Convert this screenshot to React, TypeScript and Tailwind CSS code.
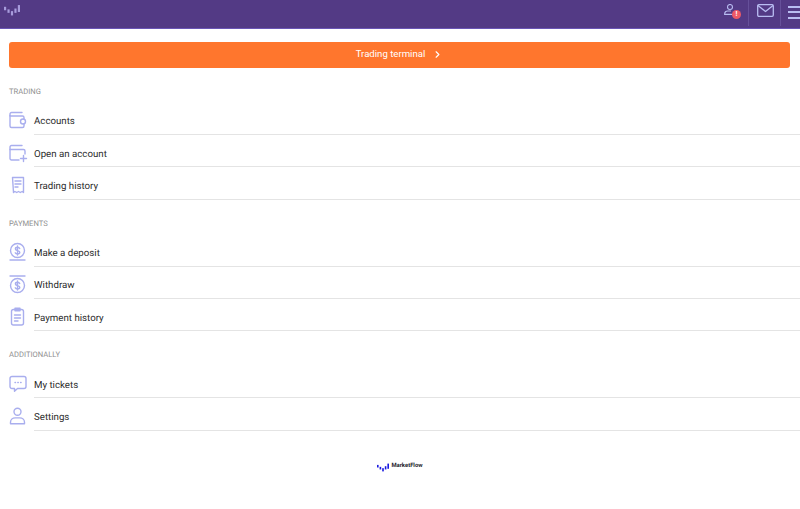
import React from 'react'
import { ChevronRight } from 'lucide-react'

const ICON = { fill: 'none', stroke: '#a9aeee', strokeWidth: 1.4, strokeLinecap: 'round', strokeLinejoin: 'round' } as const

function Svg({ children }: { children: React.ReactNode }): React.JSX.Element {
  return (
    <svg width="18" height="20" viewBox="0 0 18 20" className="overflow-visible" {...ICON}>
      {children}
    </svg>
  )
}

const WalletIcon = () => (
  <Svg>
    <path d="M1 5.500V16a1.500 1.500 0 0 0 1.500 1.500h11a1.500 1.500 0 0 0 1.500-1.500v-2" />
    <path d="M15 9V7.500A1.500 1.500 0 0 0 13.500 6H1V4a1.500 1.500 0 0 1 1.500-1.500H13" />
    <circle cx="14" cy="11.500" r="2.500" />
  </Svg>
)

const NewAccountIcon = () => (
  <Svg>
    <path d="M10 17H2.500A1.500 1.500 0 0 1 1 15.500V4a1.500 1.500 0 0 1 1.500-1.500H13" />
    <path d="M1 6.500h13.500A1.500 1.500 0 0 1 16 8v3" />
    <path d="M14.500 12.500v6M11.500 15.500h6" />
  </Svg>
)

const ReceiptIcon = () => (
  <Svg>
    <path d="M3 2.500h11v15l-1.400-1-1.800 1-1.800-1-1.800 1-1.800-1-1.400 1z" transform="translate(.5 0)" />
    <path d="M6 6h6M6 9h6M6 12h3" />
  </Svg>
)

const DepositIcon = () => (
  <Svg>
    <circle cx="8.500" cy="8.500" r="7" />
    <path d="M10.700 6.500c-.4-.9-1.100-1.200-2.200-1.200-1.300 0-2.100.7-2.100 1.600 0 2.300 4.400 1.100 4.400 3.400 0 1-.9 1.700-2.300 1.700-1.100 0-1.900-.4-2.300-1.200M8.500 4v9" />
    <path d="M1 18h15" />
  </Svg>
)

const WithdrawIcon = () => (
  <Svg>
    <circle cx="8.500" cy="10.500" r="7" />
    <path d="M10.700 8.500c-.4-.9-1.100-1.200-2.200-1.200-1.300 0-2.100.7-2.100 1.600 0 2.300 4.400 1.100 4.400 3.400 0 1-.9 1.700-2.300 1.700-1.100 0-1.900-.4-2.300-1.200M8.500 6v9" />
    <path d="M1 1h15" />
  </Svg>
)

const ClipboardIcon = () => (
  <Svg>
    <rect x="2.500" y="2.500" width="12" height="15.500" rx="2" />
    <path d="M6 1.200h5v2.600H6z" />
    <path d="M5.500 8h6M5.500 11h6M5.500 14h3.500" />
  </Svg>
)

const ChatIcon = () => (
  <svg width="18" height="18" viewBox="0 0 18 18" className="overflow-visible" {...ICON}>
    <path d="M2.500 1.500h12a2 2 0 0 1 2 2v8a2 2 0 0 1-2 2H8l-3 2.800v-2.800H2.500a2 2 0 0 1-2-2v-8a2 2 0 0 1 2-2z" transform="translate(.5 0)" />
    <path d="M6 7.500h.5M8.800 7.500h.5M11.600 7.500h.5" />
  </svg>
)

const PersonIcon = () => (
  <svg width="18" height="18" viewBox="0 0 18 18" className="overflow-visible" {...ICON}>
    <circle cx="8.500" cy="4.700" r="3.500" />
    <path d="M1.500 16.800v-1.500c0-2.800 2.300-4.400 4.700-4.400h4.600c2.400 0 4.700 1.600 4.700 4.400v1.500z" />
  </svg>
)

// bars of the chart mark, used in the header and in the footer logo
const MARK = [
  { x: 0, y: 2, h: 4 },
  { x: 4, y: 5, h: 4 },
  { x: 8, y: 7, h: 5 },
  { x: 12, y: 4, h: 5 },
  { x: 16, y: 0, h: 8 },
]

function ChartMark({ color, className }: { color: string; className: string }): React.JSX.Element {
  return (
    <svg viewBox="0 0 18.500 12" className={className} fill={color}>
      {MARK.map(b => (
        <rect key={b.x} x={b.x} y={b.y} width="2.500" height={b.h} />
      ))}
    </svg>
  )
}

interface MenuItem {
  label: string
  icon: React.ReactNode
}

const SECTIONS: { title: string; items: MenuItem[] }[] = [
  {
    title: 'TRADING',
    items: [
      { label: 'Accounts', icon: <WalletIcon /> },
      { label: 'Open an account', icon: <NewAccountIcon /> },
      { label: 'Trading history', icon: <ReceiptIcon /> },
    ],
  },
  {
    title: 'PAYMENTS',
    items: [
      { label: 'Make a deposit', icon: <DepositIcon /> },
      { label: 'Withdraw', icon: <WithdrawIcon /> },
      { label: 'Payment history', icon: <ClipboardIcon /> },
    ],
  },
  {
    title: 'ADDITIONALLY',
    items: [
      { label: 'My tickets', icon: <ChatIcon /> },
      { label: 'Settings', icon: <PersonIcon /> },
    ],
  },
]

export default function App(): React.JSX.Element {
  return (
    <div className="min-h-[509px] bg-white font-['Roboto',sans-serif] [text-rendering:geometricPrecision]">
      <header className="flex h-[29px] items-stretch justify-between border-b border-[#6a55b5] bg-[#533a85]">
        <ChartMark color="#a79bdc" className="ml-1 mt-[5px] h-[10.500px] w-[16px]" />
        <div className="flex items-stretch pb-[2px]">
          <div className="relative w-[48px] pl-[24px] pt-[4px]">
            <svg width="12" height="11" viewBox="0 0 12 11" fill="none" stroke="#b9bdf2" strokeWidth="1.100">
              <circle cx="6" cy="3" r="2.500" />
              <path d="M.6 10.400c0-2.500 1.400-3.400 3-3.400h3M.6 10.400h7" strokeLinecap="round" />
            </svg>
            <span className="absolute left-[32px] top-[9.500px] flex h-[9px] w-[9px] items-center justify-center rounded-full bg-[#ef5a66] text-[7px] font-bold leading-none text-white">
              !
            </span>
          </div>
          <div className="w-[32px] border-l border-[#66509a] pl-[7.500px] pt-[4px]">
            <svg width="17" height="13" viewBox="0 0 17 13" fill="none" stroke="#b9bdf2" strokeWidth="1.300" strokeLinejoin="round">
              <rect x="0.700" y="0.700" width="15.600" height="11.600" rx="1.200" />
              <path d="M1 1.500l7.500 6 7.500-6" />
            </svg>
          </div>
          <div className="flex w-[20px] flex-col gap-[3.500px] border-l border-[#66509a] pl-[7px] pt-[5.500px]">
            <span className="h-[2px] bg-[#b9bdf2]" />
            <span className="h-[2px] bg-[#b9bdf2]" />
            <span className="h-[2px] bg-[#b9bdf2]" />
          </div>
        </div>
      </header>

      <div className="pl-[9px] pr-[10px] pt-[13px]">
        <button className="flex h-[26px] w-full items-center justify-center gap-[7px] rounded-[3px] bg-[#ff762d] pb-[1px] text-[9.600px] font-normal text-white">
          Trading terminal
          <ChevronRight size={11} strokeWidth={2.500} />
        </button>
      </div>

      {SECTIONS.map(section => (
        <section key={section.title}>
          <h2 className="pl-[9px] pt-[19px] text-[7.600px] font-normal leading-[10px] text-[#8f8f8f]">
            {section.title}
          </h2>
          <ul className="mt-[5.500px]">
            {section.items.map(item => (
              <li key={item.label} className="flex h-[32.400px] items-stretch">
                <span className="flex w-[34px] shrink-0 items-center pl-[8.500px] pt-[3.500px]">{item.icon}</span>
                <span className="flex flex-1 items-center border-b border-[#e4e4e4] pt-[8.500px] text-[9.700px] text-[#2b2b2b]">
                  {item.label}
                </span>
              </li>
            ))}
          </ul>
        </section>
      ))}

      <footer className="mt-[32px] flex items-center justify-center gap-[2px]">
        <ChartMark color="#1a1ae0" className="h-[9px] w-[12px]" />
        <span className="text-[5.900px] font-bold leading-none text-[#1b1b2b]">MarketFlow</span>
      </footer>
    </div>
  )
}
